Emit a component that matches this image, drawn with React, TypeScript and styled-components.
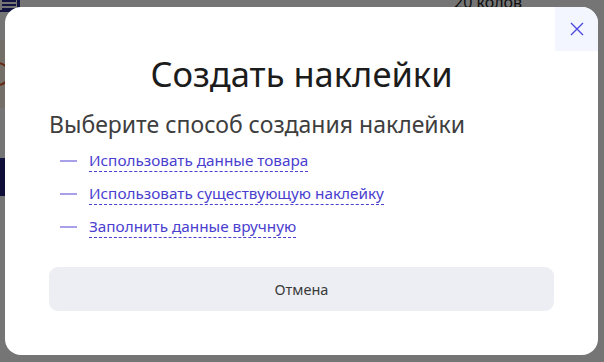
import React from "react";
import styled, { createGlobalStyle } from "styled-components";

const Global = createGlobalStyle`
  html, body { margin: 0; padding: 0; width: 604px; height: 362px; overflow: hidden; }
  body { font-family: "Noto Sans", "Open Sans", Arial, sans-serif; background: #ffffff; }
  * { box-sizing: border-box; }
`;

const Page = styled.div`
  width: 604px;
  height: 362px;
  display: grid;
  grid-template-rows: 12px 28px 68px 50px 38px 1fr;
  grid-template-columns: 40px 1fr 110px 40px;
  background: #ffffff;
`;

const Burger = styled.div`
  grid-row: 1;
  grid-column: 1;
  display: flex;
  flex-direction: column;
  gap: 2px;
  padding: 0 0 0 2px;
  width: 20px;
  border-right: 3px solid #2b2a8f;
  border-bottom: 2px solid #2b2a8f;
  span { display: block; height: 2px; background: #2b2a8f; width: 14px; }
`;

const TopText = styled.div`
  grid-row: 1;
  grid-column: 3;
  font-size: 16px;
  line-height: 12px;
  margin-top: -4px;
  color: #222;
  white-space: nowrap;
`;

const Beige = styled.div`
  grid-row: 3;
  grid-column: 1;
  background: #fff2e6;
  display: flex;
  align-items: center;
  span {
    width: 24px; height: 24px; border-radius: 50%;
    border: 2px solid #d9582a; margin-left: -14px;
  }
`;

const Navy = styled.div`
  grid-row: 5;
  grid-column: 1 / 2;
  background: #1f1f7a;
  border-top: 2px solid #2b2a8f;
`;

const Overlay = styled.div`
  position: fixed;
  inset: 0;
  background: rgba(0, 0, 0, 0.54);
  padding: 7px 6px 7px 5px;
  display: flex;
`;

const Modal = styled.div`
  position: relative;
  width: 593px;
  height: 348px;
  background: #ffffff;
  border-radius: 16px;
  overflow: hidden;
  padding: 47px 44px 0 44px;
  display: flex;
  flex-direction: column;
`;

const Close = styled.button`
  position: absolute;
  top: 0;
  right: 0;
  width: 43px;
  height: 44px;
  border: none;
  background: #f3f5ff;
  display: flex;
  align-items: center;
  justify-content: center;
  padding: 0;
  cursor: pointer;
`;

const Title = styled.h1`
  margin: 0;
  font-size: 34.5px;
  line-height: 40px;
  font-weight: 400;
  color: #1c1c1c;
  text-align: center;
`;

const Subtitle = styled.h2`
  margin: 16px 0 0 0;
  font-size: 23px;
  line-height: 28px;
  font-weight: 400;
  color: #3e3e3e;
`;

const List = styled.ul`
  list-style: none;
  margin: 12px 0 0 0;
  padding: 0 0 0 11px;
  display: flex;
  flex-direction: column;
  gap: 11px;
`;

const Item = styled.li`
  display: flex;
  align-items: center;
  gap: 12px;
  height: 22px;
`;

const Dash = styled.span`
  width: 17px;
  height: 2px;
  background: #a8a0e8;
  flex: none;
`;

const Link = styled.a`
  font-size: 15.3px;
  line-height: 20px;
  color: #4a3ecf;
  text-decoration: none;
  border-bottom: 1px dashed #4a3ecf;
  padding-bottom: 1px;
  cursor: pointer;
`;

const Cancel = styled.button`
  margin-top: 29px;
  height: 44px;
  width: 100%;
  border: none;
  border-radius: 9px;
  background: #eceef3;
  font-family: inherit;
  font-size: 14.5px;
  color: #3a3a3a;
  cursor: pointer;
`;

const items = [
  "Использовать данные товара",
  "Использовать существующую наклейку",
  "Заполнить данные вручную",
];

export default function App() {
  return (
    <>
      <Global />
      <Page>
        <Burger>
          <span />
          <span />
          <span />
        </Burger>
        <TopText>20 колов</TopText>
        <Beige>
          <span />
        </Beige>
        <Navy />
      </Page>
      <Overlay>
        <Modal>
          <Close aria-label="Закрыть">
            <svg width="14" height="14" viewBox="0 0 14 14" fill="none">
              <path d="M1 1L13 13M13 1L1 13" stroke="#4b4ae0" strokeWidth="1.4" />
            </svg>
          </Close>
          <Title>Создать наклейки</Title>
          <Subtitle>Выберите способ создания наклейки</Subtitle>
          <List>
            {items.map((t) => (
              <Item key={t}>
                <Dash />
                <Link>{t}</Link>
              </Item>
            ))}
          </List>
          <Cancel>Отмена</Cancel>
        </Modal>
      </Overlay>
    </>
  );
}
